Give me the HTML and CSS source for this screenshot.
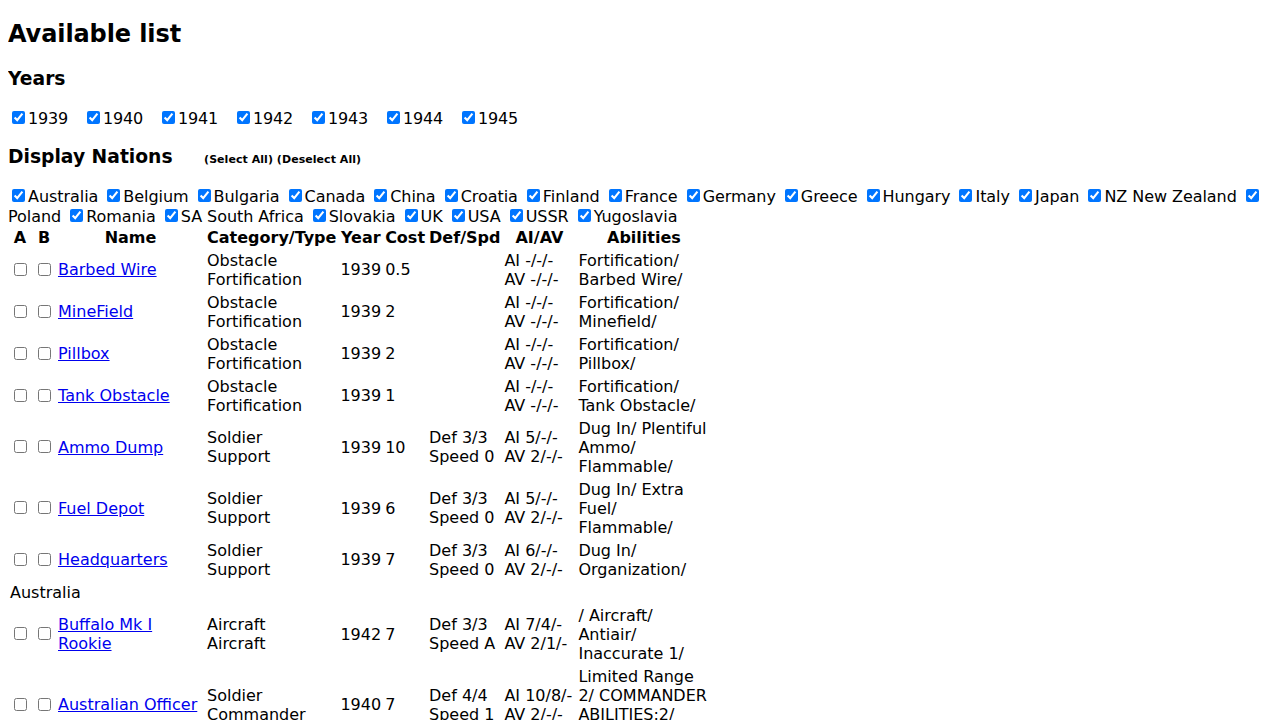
FILE: index.html
```html
<!DOCTYPE html>
<html>
<head>
<meta charset="utf-8">
<title>Available list</title>
<link rel="stylesheet" href="styles.css">
</head>
<body>
<h2>Available list</h2>
<h3>Years</h3>
<div class="years"><input type="checkbox" checked>1939&nbsp;&nbsp; <input type="checkbox" checked>1940&nbsp;&nbsp; <input type="checkbox" checked>1941&nbsp;&nbsp; <input type="checkbox" checked>1942&nbsp;&nbsp; <input type="checkbox" checked>1943&nbsp;&nbsp; <input type="checkbox" checked>1944&nbsp;&nbsp; <input type="checkbox" checked>1945</div>
<h3>Display Nations <span class="sel">(Select All) (Deselect All)</span></h3>
<div class="nations"><input type="checkbox" checked>Australia <input type="checkbox" checked>Belgium <input type="checkbox" checked>Bulgaria <input type="checkbox" checked>Canada <input type="checkbox" checked>China <input type="checkbox" checked>Croatia <input type="checkbox" checked>Finland <input type="checkbox" checked>France <input type="checkbox" checked>Germany <input type="checkbox" checked>Greece <input type="checkbox" checked>Hungary <input type="checkbox" checked>Italy <input type="checkbox" checked>Japan <input type="checkbox" checked>NZ New Zealand <input type="checkbox" checked>Poland <input type="checkbox" checked>Romania <input type="checkbox" checked>SA South Africa <input type="checkbox" checked>Slovakia <input type="checkbox" checked>UK <input type="checkbox" checked>USA <input type="checkbox" checked>USSR <input type="checkbox" checked>Yugoslavia</div>
<table class="units">
<tr><th>A</th><th>B</th><th class="name">Name</th><th>Category/Type</th><th>Year</th><th>Cost</th><th>Def/Spd</th><th class="aiav">AI/AV</th><th class="abil">Abilities</th></tr>
<tr><td><input type="checkbox"></td><td><input type="checkbox"></td><td><a href="#">Barbed Wire</a></td><td>Obstacle<br>Fortification</td><td>1939</td><td>0.5</td><td></td><td>AI -/-/-<br>AV -/-/-</td><td>Fortification/ Barbed Wire/</td></tr>
<tr><td><input type="checkbox"></td><td><input type="checkbox"></td><td><a href="#">MineField</a></td><td>Obstacle<br>Fortification</td><td>1939</td><td>2</td><td></td><td>AI -/-/-<br>AV -/-/-</td><td>Fortification/ Minefield/</td></tr>
<tr><td><input type="checkbox"></td><td><input type="checkbox"></td><td><a href="#">Pillbox</a></td><td>Obstacle<br>Fortification</td><td>1939</td><td>2</td><td></td><td>AI -/-/-<br>AV -/-/-</td><td>Fortification/ Pillbox/</td></tr>
<tr><td><input type="checkbox"></td><td><input type="checkbox"></td><td><a href="#">Tank Obstacle</a></td><td>Obstacle<br>Fortification</td><td>1939</td><td>1</td><td></td><td>AI -/-/-<br>AV -/-/-</td><td>Fortification/ Tank Obstacle/</td></tr>
<tr><td><input type="checkbox"></td><td><input type="checkbox"></td><td><a href="#">Ammo Dump</a></td><td>Soldier<br>Support</td><td>1939</td><td>10</td><td>Def 3/3<br>Speed 0</td><td>AI 5/-/-<br>AV 2/-/-</td><td>Dug In/ Plentiful Ammo/ Flammable/</td></tr>
<tr><td><input type="checkbox"></td><td><input type="checkbox"></td><td><a href="#">Fuel Depot</a></td><td>Soldier<br>Support</td><td>1939</td><td>6</td><td>Def 3/3<br>Speed 0</td><td>AI 5/-/-<br>AV 2/-/-</td><td>Dug In/ Extra Fuel/ Flammable/</td></tr>
<tr><td><input type="checkbox"></td><td><input type="checkbox"></td><td><a href="#">Headquarters</a></td><td>Soldier<br>Support</td><td>1939</td><td>7</td><td>Def 3/3<br>Speed 0</td><td>AI 6/-/-<br>AV 2/-/-</td><td>Dug In/ Organization/</td></tr>
<tr><td colspan="9">Australia</td></tr>
<tr><td><input type="checkbox"></td><td><input type="checkbox"></td><td><a href="#">Buffalo Mk I Rookie</a></td><td>Aircraft<br>Aircraft</td><td>1942</td><td>7</td><td>Def 3/3<br>Speed A</td><td>AI 7/4/-<br>AV 2/1/-</td><td>/ Aircraft/ Antiair/ Inaccurate 1/</td></tr>
<tr><td><input type="checkbox"></td><td><input type="checkbox"></td><td><a href="#">Australian Officer</a></td><td>Soldier<br>Commander</td><td>1940</td><td>7</td><td>Def 4/4<br>Speed 1</td><td>AI 10/8/-<br>AV 2/-/-</td><td>Limited Range 2/ COMMANDER ABILITIES:2/ Spotter/</td></tr>
</table>
</body>
</html>
```
FILE: styles.css
```css
body {
  margin: 0 8px 8px 8px;
  font-family: "DejaVu Sans", sans-serif;
  font-size: 16px;
  color: #000;
  background: #fff;
}
h2 {
  letter-spacing: -0.1px;
}
.sel {
  font-size: 11px;
  margin-left: 25px;
  letter-spacing: 0.05px;
}
.years {
  letter-spacing: -0.14px;
}
.nations {
  letter-spacing: -0.053px;
}
.units {
  border-spacing: 0;
}
.units td,
.units th {
  padding: 2px;
}
.units .name {
  width: 145px;
}
.units .aiav {
  width: 70px;
}
.units .abil {
  width: 131px;
}
a {
  color: #0000ee;
}
```
